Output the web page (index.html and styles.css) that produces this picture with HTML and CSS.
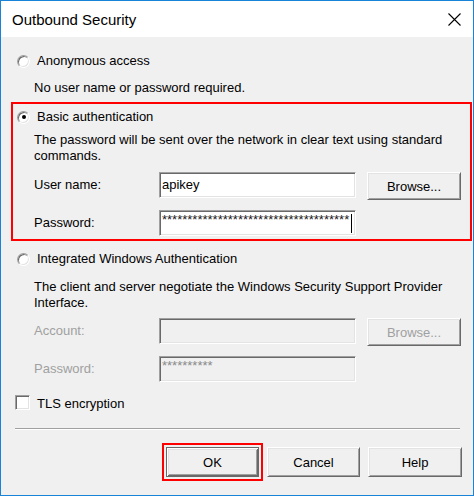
FILE: index.html
```html
<!DOCTYPE html>
<html lang="en">
<head>
<meta charset="utf-8">
<title>Outbound Security</title>
<link rel="stylesheet" href="styles.css">
</head>
<body>
<div class="window">
  <div class="titlebar">
    <span class="title">Outbound Security</span>
    <svg class="close" width="13" height="13" viewBox="0 0 13 13"><path d="M0.5 0.5 L12.5 12.5 M12.5 0.5 L0.5 12.5" stroke="#000" stroke-width="1.1" fill="none"/></svg>
  </div>
  <div class="content">
    <div class="group g1">
      <div class="radio-row"><span class="radio"></span><span>Anonymous access</span></div>
      <p class="desc d1">No user name or password required.</p>
    </div>
    <div class="group g2 highlight">
      <div class="radio-row"><span class="radio checked"></span><span>Basic authentication</span></div>
      <p class="desc d2">The password will be sent over the network in clear text using standard commands.</p>
      <div class="fields f2">
        <span class="label">User name:</span>
        <div class="input">apikey</div>
        <div class="btn small">Browse...</div>
        <span class="label">Password:</span>
        <div class="input pw"><span class="stars">*************************************</span><span class="caret"></span></div>
      </div>
    </div>
    <div class="group g3">
      <div class="radio-row"><span class="radio"></span><span>Integrated Windows Authentication</span></div>
      <p class="desc d3">The client and server negotiate the Windows Security Support Provider Interface.</p>
      <div class="fields f3">
        <span class="label disabled">Account:</span>
        <div class="input off"></div>
        <div class="btn small disabled">Browse...</div>
        <span class="label disabled">Password:</span>
        <div class="input off pw"><span class="stars dim">**********</span></div>
      </div>
    </div>
    <div class="check-row"><span class="checkbox"></span><span>TLS encryption</span></div>
    <div class="sep"></div>
    <div class="buttons">
      <div class="btn default">OK</div>
      <div class="btn">Cancel</div>
      <div class="btn">Help</div>
    </div>
  </div>
</div>
</body>
</html>
```
FILE: styles.css
```css
* { box-sizing: border-box; }
html, body { margin: 0; padding: 0; background: #fff; }
body {
  font-family: "Liberation Sans", Arial, sans-serif;
  font-size: 13px;
  color: #000;
}
.window {
  width: 474px;
  height: 496px;
  border: 1px solid #1883d7;
  background: #f0f0f0;
  overflow: hidden;
  display: flex;
  flex-direction: column;
}
.titlebar {
  height: 36px;
  background: #fff;
  display: flex;
  align-items: center;
  justify-content: space-between;
  padding: 0 11px 0 11px;
  flex: none;
}
.title {
  font-size: 15px;
  color: #000;
  margin-top: 1px;
}
.close { display: block; margin-right: 1px; margin-top: 1px; }
.content {
  padding: 0 1px 0 10px;
  display: flex;
  flex-direction: column;
}
.group {
  border: 2px solid transparent;
}
.group.highlight { border-color: #ff0000; }
.g1 { padding: 14px 0 4px 0; }
.g2 { padding: 5px 0 3px 0; }
.g3 { padding: 8px 0 0 0; }
.radio-row {
  height: 16px;
  line-height: 16px;
  display: flex;
  align-items: center;
  gap: 7px;
  padding-left: 4px;
}
.radio {
  width: 13px;
  height: 13px;
  border-radius: 50%;
  background: #fff;
  border: 1px solid;
  border-color: #a0a0a0 #ffffff #ffffff #a0a0a0;
  box-shadow: inset 1px 1px 0 #696969, inset -1px -1px 0 #e3e3e3;
  display: flex;
  align-items: center;
  justify-content: center;
  flex: none;
}
.radio.checked::after {
  content: "";
  width: 4px;
  height: 4px;
  border-radius: 50%;
  background: #000;
}
.desc {
  margin: 0;
  padding-left: 21px;
  padding-right: 4px;
  line-height: 16px;
}
.d1 { margin-top: 11px; }
.d2 { margin-top: 7px; }
.d3 { margin-top: 12px; }
.fields {
  display: grid;
  grid-template-columns: 114px 197px 94px;
  column-gap: 11px;
  row-gap: 10px;
  align-items: start;
  padding-left: 21px;
}
.f2 { margin-top: 8px; }
.f3 { margin-top: 7px; }
.label {
  line-height: 26px;
  height: 26px;
}
.label.disabled { color: #a0a0a0; }
.input {
  height: 26px;
  background: #fff;
  border: 1px solid;
  border-color: #a0a0a0 #ffffff #ffffff #a0a0a0;
  box-shadow: inset 1px 1px 0 #696969, inset -1px -1px 0 #e3e3e3;
  padding: 0 2px 0 2px;
  line-height: 23px;
  position: relative;
  white-space: nowrap;
  overflow: hidden;
}
.input.off { background: #f0f0f0; }
.input.pw { grid-column: 2; }
.stars {
  font-size: 13px;
  letter-spacing: 0;
  line-height: 16px;
  display: inline-block;
  vertical-align: top;
  margin-top: 1px;
  color: #1a1a1a;
}
.stars.dim { color: #8a8a8a; }
.caret {
  position: absolute;
  left: 191px;
  top: 3px;
  width: 1px;
  height: 19px;
  background: #000;
}
.btn {
  width: 93px;
  height: 30px;
  background: #f0f0f0;
  border: 1px solid;
  border-color: #ffffff #696969 #696969 #ffffff;
  box-shadow: inset 1px 1px 0 #e3e3e3, inset -1px -1px 0 #a0a0a0;
  display: flex;
  align-items: center;
  justify-content: center;
  color: #000;
}
.btn.small { width: 94px; height: 28px; }
.btn.disabled { color: #a0a0a0; }
.btn.default {
  border: 1px solid #696969;
  box-shadow: inset 1px 1px 0 #ffffff, inset -1px -1px 0 #696969, inset 2px 2px 0 #e3e3e3, inset -2px -2px 0 #a0a0a0;
  outline: 2px solid #ff0000;
  outline-offset: 2px;
}
.check-row {
  margin-top: 11px;
  height: 16px;
  display: flex;
  align-items: center;
  gap: 7px;
  padding-left: 4px;
}
.checkbox {
  width: 15px;
  height: 15px;
  background: #fff;
  border: 1px solid;
  border-color: #a0a0a0 #ffffff #ffffff #a0a0a0;
  box-shadow: inset 1px 1px 0 #696969, inset -1px -1px 0 #e3e3e3;
  flex: none;
  margin-top: -2px;
}
.sep {
  margin: 17px 12px 0 4px;
  height: 2px;
  border-top: 1px solid #a0a0a0;
  border-bottom: 1px solid #ffffff;
}
.buttons {
  margin-top: 17px;
  display: flex;
  justify-content: flex-end;
  gap: 8px;
  padding-right: 10px;
}
.buttons .btn:last-child { width: 94px; }
```
